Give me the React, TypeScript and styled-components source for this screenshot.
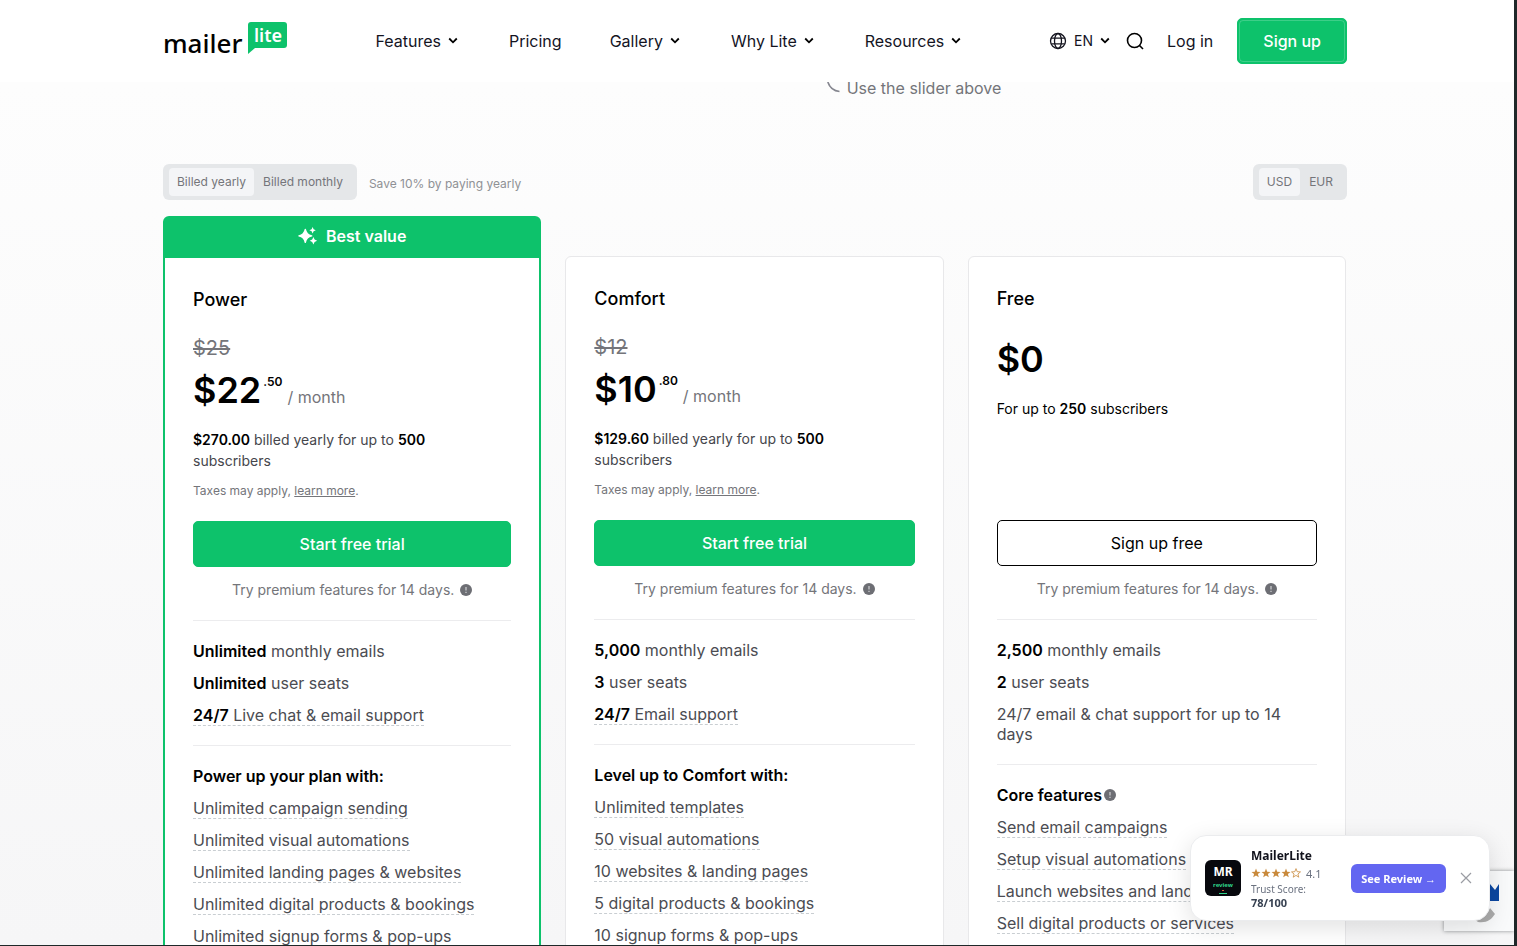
import React from "react";
import styled, { createGlobalStyle, css } from "styled-components";

const green = "#0dc26b";
const muted = "#74757a";

const GlobalStyle = createGlobalStyle`
  *, *::before, *::after { box-sizing: border-box; }
  body { margin: 0; font-family: Inter, "Liberation Sans", sans-serif; color: #000; }
  button, input { font: inherit; }
  button { cursor: pointer; }
  a { color: inherit; text-decoration: none; }
  h2, h3, p, ul { margin: 0; padding: 0; font-weight: inherit; font-size: inherit; }
  ul { list-style: none; }
`;

const Page = styled.div`
  height: 100vh;
  overflow: hidden;
  padding-right: 4px;
  border-right: 3px solid #1f2829;
  border-bottom: 1px solid #1f2829;
  background: linear-gradient(#fdfdfd 82px, #f6f6f7);
`;

const Container = styled.div`
  width: 100%;
  max-width: 1184px;
  margin: 0 auto;
`;

const Header = styled.header`
  margin-right: -4px;
  padding-right: 4px;
  background: #fff;
`;

const HeaderRow = styled(Container)`
  display: flex;
  align-items: center;
  height: 82px;
`;

const Logo = styled.a`
  display: flex;
  gap: 6px;
  font-family: "Noto Sans", sans-serif;
`;

const LogoWord = styled.span`
  padding-top: 3px;
  font-size: 26px;
  line-height: 36px;
  font-weight: 500;
`;

const LogoBubble = styled.span`
  position: relative;
  width: 39px;
  height: 26px;
  border-radius: 3px 3px 3px 0;
  background: ${green};
  color: #fff;
  font-size: 18px;
  line-height: 26px;
  font-weight: 600;
  text-align: center;
  svg { position: absolute; left: 0; top: 100%; }
`;

const Nav = styled.nav`
  display: flex;
  gap: 48px;
  margin-left: 88px;
`;

const NavItem = styled.a<{ $small?: boolean }>`
  display: flex;
  align-items: center;
  gap: 4px;
  font-size: ${(p) => (p.$small ? 14 : 16)}px;
  line-height: 24px;
  color: #14141f;
`;

const HeaderActions = styled.div`
  display: flex;
  align-items: center;
  margin-left: auto;
`;

const IconButton = styled.button<{ $gap: number }>`
  display: flex;
  align-items: center;
  margin: 0 0 0 ${(p) => p.$gap}px;
  padding: 0;
  border: 0;
  background: none;
  color: #14141f;
`;

const LangLabel = styled.span`
  margin: 0 4px 0 7px;
  font-size: 14px;
  line-height: 20px;
`;

const LoginLink = styled(NavItem)`
  margin: 0 24px 0 22px;
`;

const Button = styled.button<{ $outline?: boolean; $block?: boolean }>`
  height: 46px;
  padding: 0 25px;
  border: 1px solid ${(p) => (p.$outline ? "#000" : green)};
  border-radius: 5px;
  background: ${(p) => (p.$outline ? "#fff" : green)};
  color: ${(p) => (p.$outline ? "#000" : "#fff")};
  font-size: 16px;
  font-weight: ${(p) => (p.$outline ? 400 : 500)};
  ${(p) => p.$block && css`width: 100%;`}
`;

const SignUpButton = styled(Button)`
  position: relative;
  &::before {
    content: "";
    position: absolute;
    inset: 1px;
    border: 1px solid rgba(255, 255, 255, 0.2);
    border-radius: 4px;
  }
`;

const SliderHint = styled.p`
  display: flex;
  justify-content: center;
  gap: 7px;
  padding: 0 0 64px 318px;
  color: ${muted};
  font-size: 16px;
  line-height: 12px;
`;

const BillingRow = styled.div`
  display: flex;
  align-items: center;
  margin-top: 4px;
`;

const Toggle = styled.div`
  display: flex;
  gap: 1px;
  height: 36px;
  padding: 4px 6px;
  border-radius: 6px;
  background: #e5e7e9;
`;

const ToggleOption = styled.button<{ $on?: boolean }>`
  padding: 0 8px;
  border: 0;
  border-radius: 4px;
  background: ${(p) => (p.$on ? "#f4f5f7" : "transparent")};
  color: ${muted};
  font-size: 12px;
  line-height: 28px;
`;

const SaveNote = styled.span`
  flex: 1;
  margin: 3px 12px 0;
  color: #8f9195;
  font-size: 12px;
`;

const Plans = styled.main`
  display: grid;
  grid-template-columns: repeat(3, 1fr);
  gap: 24px;
  margin: 16px 1px 0 0;
`;

const Card = styled.article<{ $featured?: boolean }>`
  display: flex;
  flex-direction: column;
  margin-top: ${(p) => (p.$featured ? 0 : 40)}px;
  border: ${(p) => (p.$featured ? `2px solid ${green}` : "1px solid #e8e8ea")};
  border-radius: 6px;
  background: #fff;
`;

const Ribbon = styled.div`
  display: flex;
  align-items: center;
  justify-content: center;
  gap: 8px;
  height: 40px;
  padding-bottom: 4px;
  background: ${green};
  color: #fff;
  font-size: 16px;
  font-weight: 600;
`;

const CardBody = styled.div`
  padding: 28px;
`;

const Summary = styled.div`
  display: flex;
  flex-direction: column;
  min-height: 235px;
`;

const PlanName = styled.h2`
  font-size: 18px;
  line-height: 28px;
  font-weight: 500;
`;

const OldPrice = styled.s`
  margin-top: 22px;
  color: ${muted};
  font-size: 20px;
  line-height: 24px;
`;

const PriceRow = styled.p<{ $gap: number }>`
  display: flex;
  margin-top: ${(p) => p.$gap}px;
  font-size: 36px;
  line-height: 40px;
  font-weight: 600;
`;

const Cents = styled.sup`
  margin-left: 2px;
  font-size: 12px;
  line-height: 24px;
  font-weight: 600;
`;

const Period = styled.span`
  align-self: flex-end;
  margin-left: 5px;
  color: ${muted};
  font-size: 16px;
  line-height: 26px;
  font-weight: 400;
`;

const Billed = styled.p<{ $dark?: boolean }>`
  margin-top: 19px;
  padding-right: 24px;
  color: ${(p) => (p.$dark ? "#000" : "#45464c")};
  font-size: 14px;
  line-height: 21px;
  b { color: #000; font-weight: 600; }
`;

const Taxes = styled.p`
  margin-top: 10px;
  color: ${muted};
  font-size: 12px;
  line-height: 20px;
  a { text-decoration: underline; }
`;

const TrialNote = styled.p`
  display: flex;
  align-items: center;
  justify-content: center;
  gap: 6px;
  margin-top: 13px;
  color: ${muted};
  font-size: 14px;
  line-height: 20px;
`;

const Features = styled.ul`
  display: flex;
  flex-direction: column;
  gap: 12px;
  margin-top: 20px;
  padding-top: 20px;
  border-top: 1px solid #ececee;
  color: #4b4c52;
  font-size: 16px;
  line-height: 20px;
  b { color: #000; font-weight: 600; }
`;

const FeatureHeading = styled.li`
  display: flex;
  align-items: center;
  gap: 2px;
  color: #000;
  font-weight: 600;
`;

const Hinted = styled.span`
  border-bottom: 1px dashed #c9ced2;
`;

const Widget = styled.aside`
  position: fixed;
  right: 27px;
  bottom: 25px;
  display: flex;
  align-items: center;
  width: 300px;
  height: 86px;
  padding: 0 17px 0 14px;
  border: 1px solid #ebecee;
  border-radius: 16px;
  background: #fff;
  box-shadow: 0 6px 24px rgba(0, 0, 0, 0.12);
  font-family: "Noto Sans", sans-serif;
`;

const WidgetLogo = styled.div`
  display: flex;
  flex-direction: column;
  align-items: center;
  gap: 1px;
  width: 36px;
  height: 36px;
  padding-top: 3px;
  border-radius: 6px;
  background: #07080d;
  color: #fff;
  font-size: 12px;
  line-height: 17px;
  font-weight: 700;
  small { color: #2fd58a; font-size: 6px; line-height: 8px; }
`;

const WidgetInfo = styled.div`
  flex: 1;
  margin-left: 10px;
  color: #6b7280;
  font-size: 10px;
  line-height: 14px;
  b { display: block; color: #374151; font-size: 11px; }
`;

const WidgetTitle = styled.h3`
  color: #11121c;
  font-size: 12px;
  line-height: 18px;
  font-weight: 700;
`;

const Rating = styled.p`
  display: flex;
  align-items: center;
  gap: 5px;
  font-size: 11px;
  line-height: 17px;
`;

const ReviewButton = styled.button`
  height: 29px;
  padding: 0 10px;
  border: 0;
  border-radius: 6px;
  background: #6366f1;
  color: #fff;
  font-size: 11px;
  font-weight: 700;
`;

const Badge = styled.div`
  position: fixed;
  right: 3px;
  bottom: 15px;
  width: 70px;
  height: 60px;
  background: #f9fafb;
  box-shadow: 0 0 4px #8a8d90;
  clip-path: inset(-6px 0 -6px -6px);
  svg { display: block; }
`;

const Chevron = () => (
  <svg width="16" height="16" viewBox="0 0 16 16" fill="none" stroke="#000" strokeWidth="1.800" aria-hidden>
    <path d="M4.200 5.500 L8 9.300 L11.800 5.500" />
  </svg>
);

const Info = () => (
  <svg width="12" height="12" viewBox="0 0 12 12" aria-hidden>
    <circle cx="6" cy="6" r="6" fill="#6d6e74" />
    <path d="M6 3v3.600M6 7.800v1.200" stroke="#c9cacd" strokeWidth="1.300" />
  </svg>
);

const Star = ({ hollow }: { hollow?: boolean }) => (
  <svg width="10" height="10" viewBox="0 0 10 10" aria-hidden>
    <path
      d="M5 .6 6.200 3.700 9.500 3.900 6.900 6 7.800 9.200 5 7.400 2.200 9.200 3.100 6 .5 3.900 3.800 3.700Z"
      fill={hollow ? "none" : "#c98a3c"}
      stroke="#c98a3c"
      strokeWidth={hollow ? 0.8 : 0}
    />
  </svg>
);

type Feature = { strong?: string; text: string; hinted?: boolean };
type Plan = {
  name: string;
  featured?: boolean;
  old?: string;
  price: string;
  cents?: string;
  yearly?: string;
  limit: string;
  cta: string;
  basics: Feature[];
  heading: string;
  headingInfo?: boolean;
  extras: string[];
};

const plans: Plan[] = [
  {
    name: "Power",
    featured: true,
    old: "$25",
    price: "$22",
    cents: ".50",
    yearly: "$270.00",
    limit: "500",
    cta: "Start free trial",
    basics: [
      { strong: "Unlimited", text: "monthly emails" },
      { strong: "Unlimited", text: "user seats" },
      { strong: "24/7", text: "Live chat & email support", hinted: true },
    ],
    heading: "Power up your plan with:",
    extras: [
      "Unlimited campaign sending",
      "Unlimited visual automations",
      "Unlimited landing pages & websites",
      "Unlimited digital products & bookings",
      "Unlimited signup forms & pop-ups",
    ],
  },
  {
    name: "Comfort",
    old: "$12",
    price: "$10",
    cents: ".80",
    yearly: "$129.60",
    limit: "500",
    cta: "Start free trial",
    basics: [
      { strong: "5,000", text: "monthly emails" },
      { strong: "3", text: "user seats" },
      { strong: "24/7", text: "Email support", hinted: true },
    ],
    heading: "Level up to Comfort with:",
    extras: [
      "Unlimited templates",
      "50 visual automations",
      "10 websites & landing pages",
      "5 digital products & bookings",
      "10 signup forms & pop-ups",
    ],
  },
  {
    name: "Free",
    price: "$0",
    limit: "250",
    cta: "Sign up free",
    basics: [
      { strong: "2,500", text: "monthly emails" },
      { strong: "2", text: "user seats" },
      { text: "24/7 email & chat support for up to 14 days" },
    ],
    heading: "Core features",
    headingInfo: true,
    extras: [
      "Send email campaigns",
      "Setup visual automations",
      "Launch websites and landing pages",
      "Sell digital products or services",
    ],
  },
];

const PlanCard = ({ plan }: { plan: Plan }) => (
  <Card $featured={plan.featured}>
    {plan.featured && (
      <Ribbon>
        <svg width="20" height="20" viewBox="0 0 20 20" fill="#fff" aria-hidden>
          <path d="M7.300 3.500Q8.300 8.900 13.700 9.900 8.300 10.900 7.300 16.300 6.300 10.900 .9 9.900 6.300 8.900 7.300 3.500Z" stroke="#fff" strokeWidth="1.400" strokeLinejoin="round" />
          <path d="M14.600 1 15.600 3.200 17.800 4.200 15.600 5.200 14.600 7.400 13.600 5.200 11.400 4.200 13.600 3.200Z" />
          <path d="M15.400 11 16.600 13.500 19.100 14.700 16.600 15.900 15.400 18.400 14.200 15.900 11.700 14.700 14.200 13.500Z" />
        </svg>
        Best value
      </Ribbon>
    )}
    <CardBody>
      <Summary>
        <PlanName>{plan.name}</PlanName>
        {plan.old && <OldPrice>{plan.old}</OldPrice>}
        <PriceRow $gap={plan.old ? 10 : 26}>
          {plan.price}
          {plan.cents && <Cents>{plan.cents}</Cents>}
          {plan.cents && <Period>/ month</Period>}
        </PriceRow>
        {plan.yearly ? (
          <>
            <Billed>
              <b>{plan.yearly}</b> billed yearly for up to <b>{plan.limit}</b> subscribers
            </Billed>
            <Taxes>
              Taxes may apply, <a href="#taxes">learn more</a>.
            </Taxes>
          </>
        ) : (
          <Billed $dark>
            For up to <b>{plan.limit}</b> subscribers
          </Billed>
        )}
      </Summary>
      <Button $block $outline={!plan.yearly}>{plan.cta}</Button>
      <TrialNote>
        Try premium features for 14 days. <Info />
      </TrialNote>
      <Features>
        {plan.basics.map((f) => {
          const content = (
            <>
              {f.strong && <b>{f.strong}</b>} {f.text}
            </>
          );
          return <li key={f.text}>{f.hinted ? <Hinted>{content}</Hinted> : content}</li>;
        })}
      </Features>
      <Features>
        <FeatureHeading>
          {plan.heading}
          {plan.headingInfo && <Info />}
        </FeatureHeading>
        {plan.extras.map((e) => (
          <li key={e}>
            <Hinted>{e}</Hinted>
          </li>
        ))}
      </Features>
    </CardBody>
  </Card>
);

const navItems = [
  { label: "Features", menu: true },
  { label: "Pricing" },
  { label: "Gallery", menu: true },
  { label: "Why Lite", menu: true },
  { label: "Resources", menu: true },
];

export default function App() {
  return (
    <>
      <GlobalStyle />
      <Page>
        <Header>
          <HeaderRow>
            <Logo href="#home">
              <LogoWord>mailer</LogoWord>
              <LogoBubble>
                lite
                <svg width="8" height="6" viewBox="0 0 8 6" aria-hidden>
                  <path d="M0 0H7L0 6Z" fill={green} />
                </svg>
              </LogoBubble>
            </Logo>
            <Nav>
              {navItems.map((n) => (
                <NavItem key={n.label} href={`#${n.label}`}>
                  {n.label}
                  {n.menu && <Chevron />}
                </NavItem>
              ))}
            </Nav>
            <HeaderActions>
              <IconButton $gap={0} aria-label="Language">
                <svg width="18" height="18" viewBox="0 0 18 18" fill="none" stroke="#14141f" strokeWidth="1.300" aria-hidden>
                  <circle cx="9" cy="9" r="7.500" />
                  <ellipse cx="9" cy="9" rx="3.500" ry="7.500" />
                  <path d="M2.200 6.200H15.800M2.200 11.800H15.800" />
                </svg>
                <LangLabel>EN</LangLabel>
                <Chevron />
              </IconButton>
              <IconButton $gap={12} aria-label="Search">
                <svg width="20" height="20" viewBox="0 0 20 20" fill="none" stroke="#000" strokeWidth="1.600" aria-hidden>
                  <circle cx="9.500" cy="9.500" r="7" />
                  <path d="M14.500 14.500 18 18" />
                </svg>
              </IconButton>
              <LoginLink href="#login">Log in</LoginLink>
              <SignUpButton>Sign up</SignUpButton>
            </HeaderActions>
          </HeaderRow>
        </Header>
        <Container>
          <SliderHint>
            <svg width="13" height="14" viewBox="0 0 13 14" fill="none" stroke="#85868f" strokeWidth="1.700" aria-hidden>
              <path d="M.8 0C2.500 5 6.500 9 12.500 9.500" />
            </svg>
            Use the slider above
          </SliderHint>
          <BillingRow>
            <Toggle>
              <ToggleOption $on aria-pressed>Billed yearly</ToggleOption>
              <ToggleOption>Billed monthly</ToggleOption>
            </Toggle>
            <SaveNote>Save 10% by paying yearly</SaveNote>
            <Toggle>
              <ToggleOption $on aria-pressed>USD</ToggleOption>
              <ToggleOption>EUR</ToggleOption>
            </Toggle>
          </BillingRow>
          <Plans>
            {plans.map((p) => (
              <PlanCard key={p.name} plan={p} />
            ))}
          </Plans>
        </Container>
      </Page>
      <Badge>
        <svg width="71" height="60" viewBox="0 0 71 60" aria-hidden>
          <path d="M46 13 51 19 55 13V30H46Z" fill="#0b47a1" />
          <path d="M34 51C43 52 47 49 51 43L46 37C43 43 40 46 30 48Z" fill="#ababab" />
        </svg>
      </Badge>
      <Widget>
        <WidgetLogo>
          MR
          <small>review</small>
          <svg width="10" height="5" viewBox="0 0 10 5" aria-hidden>
            <path d="M4 .5h2" stroke="#e0603a" />
            <path d="M1 3.500h8" stroke="#2fd58a" />
          </svg>
        </WidgetLogo>
        <WidgetInfo>
          <WidgetTitle>MailerLite</WidgetTitle>
          <Rating>
            <span>
              <Star />
              <Star />
              <Star />
              <Star />
              <Star hollow />
            </span>
            4.1
          </Rating>
          Trust Score: <b>78/100</b>
        </WidgetInfo>
        <ReviewButton>See Review →</ReviewButton>
        <IconButton $gap={14} aria-label="Close">
          <svg width="12" height="12" viewBox="0 0 12 12" stroke="#9a9ca3" strokeWidth="1.200" aria-hidden>
            <path d="M1 1 11 11M11 1 1 11" />
          </svg>
        </IconButton>
      </Widget>
    </>
  );
}
